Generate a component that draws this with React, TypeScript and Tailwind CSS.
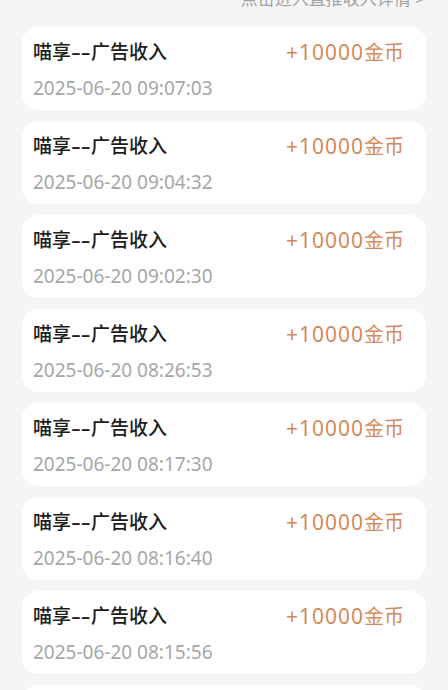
import React from "react";

const times = [
  "2025-06-20 09:07:03",
  "2025-06-20 09:04:32",
  "2025-06-20 09:02:30",
  "2025-06-20 08:26:53",
  "2025-06-20 08:17:30",
  "2025-06-20 08:16:40",
  "2025-06-20 08:15:56",
  "2025-06-20 08:15:10",
];

const font = { fontFamily: '"Noto Sans", "Noto Sans CJK SC", sans-serif' };

export default function App() {
  return (
    <div className="min-h-screen bg-[#f5f5f5] px-[22px] overflow-hidden" style={font}>
      <div className="-mt-[13px] h-[40px] text-right text-[17px] leading-[24px] text-[#a3a3a3] pr-[1px]">
        点击进入直推收入详情 &gt;
      </div>
      {times.map((t, i) => (
        <div
          key={i}
          className="mb-[11px] flex h-[83px] items-start justify-between rounded-[16px] bg-white pl-[11px] pr-[22px] pt-[13px]"
        >
          <div className="flex flex-col">
            <div className="whitespace-nowrap text-[19px] font-medium leading-[24px] text-[#1c1c1c]">
              喵享
              <span className="inline-block w-[20px]">
                <span className="inline-block origin-left scale-x-[1.6]">--</span>
              </span>
              广告收入
            </div>
            <div className="mt-[12px] text-[19px] leading-[24px] text-[#a6a6a6]">{t}</div>
          </div>
          <div className="whitespace-nowrap leading-[24px] text-[#d4895b]">
            <span className="text-[21px] tracking-[1px]">+10000</span>
            <span className="text-[20px]">金币</span>
          </div>
        </div>
      ))}
    </div>
  );
}
